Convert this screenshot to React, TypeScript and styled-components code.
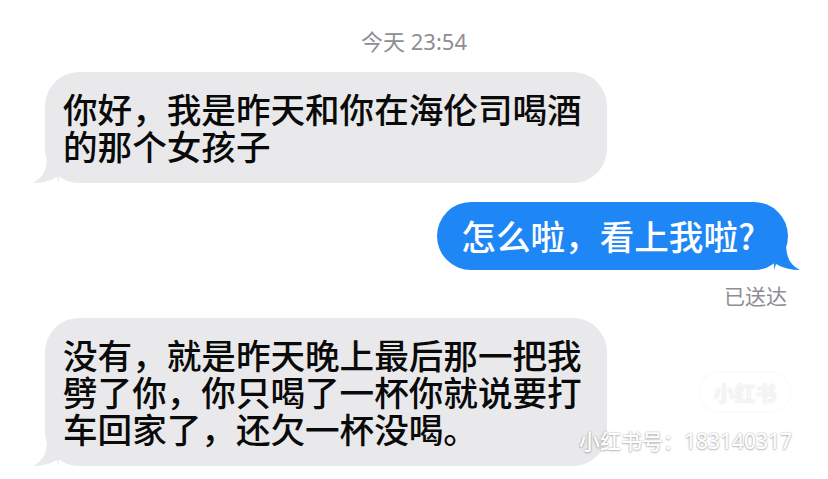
import React from "react";
import styled, { createGlobalStyle } from "styled-components";

const Global = createGlobalStyle`
  html, body { margin: 0; padding: 0; background: #ffffff; }
  body { width: 828px; height: 479px; overflow: hidden; }
  * { box-sizing: border-box; }
`;

const FONT = `"Noto Sans CJK SC", "Noto Sans", "Liberation Sans", sans-serif`;
const META_FONT = `"Noto Sans", "Noto Sans CJK SC", sans-serif`;

const Page = styled.div`
  position: relative;
  width: 828px;
  height: 479px;
  display: flex;
  flex-direction: column;
  padding-top: 27px;
  font-family: ${FONT};
  background: #fff;
`;

const Stamp = styled.div`
  text-align: center;
  font-family: ${META_FONT};
  font-size: 22px;
  line-height: 28px;
  color: #8e8e93;
  margin-bottom: 17px;
`;

const Row = styled.div<{ $side: "left" | "right"; $gap: number }>`
  display: flex;
  justify-content: ${(p) => (p.$side === "left" ? "flex-start" : "flex-end")};
  padding: 0 40px 0 45px;
  margin-bottom: ${(p) => p.$gap}px;
`;

const Bubble = styled.div<{ $side: "left" | "right" }>`
  position: relative;
  font-size: 34.6px;
  line-height: 37px;
  font-weight: 500;
  letter-spacing: 0;
  border-radius: 34px;
  ${(p) =>
    p.$side === "left"
      ? `
    width: 562px;
    background: #e9e9eb;
    color: #0a0a0a;
    padding: 18px 16px 19px 18px;
  `
      : `
    background: #1f86f6;
    color: #ffffff;
    padding: 15px 33px 16px 24px;
  `}
`;

const Tail = styled.svg<{ $side: "left" | "right" }>`
  position: absolute;
  bottom: 0;
  width: 26px;
  height: 28px;
  ${(p) => (p.$side === "left" ? "left: -12px;" : "right: -12px;")}
`;

const Status = styled.div`
  text-align: right;
  font-family: ${META_FONT};
  font-size: 21px;
  line-height: 28px;
  color: #8e8e93;
  padding-right: 41px;
  margin-top: 12px;
  margin-bottom: 8px;
`;

const Logo = styled.div`
  position: absolute;
  left: 700px;
  top: 373px;
  width: 90px;
  height: 38px;
  border-radius: 19px;
  border: 2px solid rgba(255, 255, 255, 0.9);
  box-shadow: 0 0 3px rgba(0, 0, 0, 0.07);
  display: flex;
  align-items: center;
  justify-content: center;
  font-size: 21px;
  font-weight: 700;
  color: rgba(246, 246, 246, 0.95);
  text-shadow: 0 0 2px rgba(0, 0, 0, 0.12);
`;

const Watermark = styled.div`
  position: absolute;
  left: 579px;
  top: 426px;
  font-family: ${META_FONT};
  font-size: 21px;
  font-weight: 500;
  line-height: 30px;
  color: #ffffff;
  text-shadow: 0 0 2px rgba(0, 0, 0, 0.35), 0 1px 2px rgba(0, 0, 0, 0.2);
`;

const LeftTail = () => (
  <Tail $side="left" viewBox="0 0 26 28">
    <path d="M14 0 C14 12 12 22 0 28 C9 28 17 26 24 22 L26 28 L26 0 Z" fill="#e9e9eb" />
  </Tail>
);

const RightTail = () => (
  <Tail $side="right" viewBox="0 0 26 28">
    <path d="M12 0 C12 12 14 22 26 28 C17 28 9 26 2 22 L0 28 L0 0 Z" fill="#1f86f6" />
  </Tail>
);

export default function App() {
  return (
    <>
      <Global />
      <Page>
        <Stamp>今天 23:54</Stamp>
        <Row $side="left" $gap={19}>
          <Bubble $side="left">
            你好，我是昨天和你在海伦司喝酒的那个女孩子
            <LeftTail />
          </Bubble>
        </Row>
        <Row $side="right" $gap={0}>
          <Bubble $side="right">
            怎么啦，看上我啦?
            <RightTail />
          </Bubble>
        </Row>
        <Status>已送达</Status>
        <Row $side="left" $gap={0}>
          <Bubble $side="left">
            没有，就是昨天晚上最后那一把我劈了你，你只喝了一杯你就说要打车回家了，还欠一杯没喝。
            <LeftTail />
          </Bubble>
        </Row>
        <Logo>小红书</Logo>
        <Watermark>小红书号：183140317</Watermark>
      </Page>
    </>
  );
}
